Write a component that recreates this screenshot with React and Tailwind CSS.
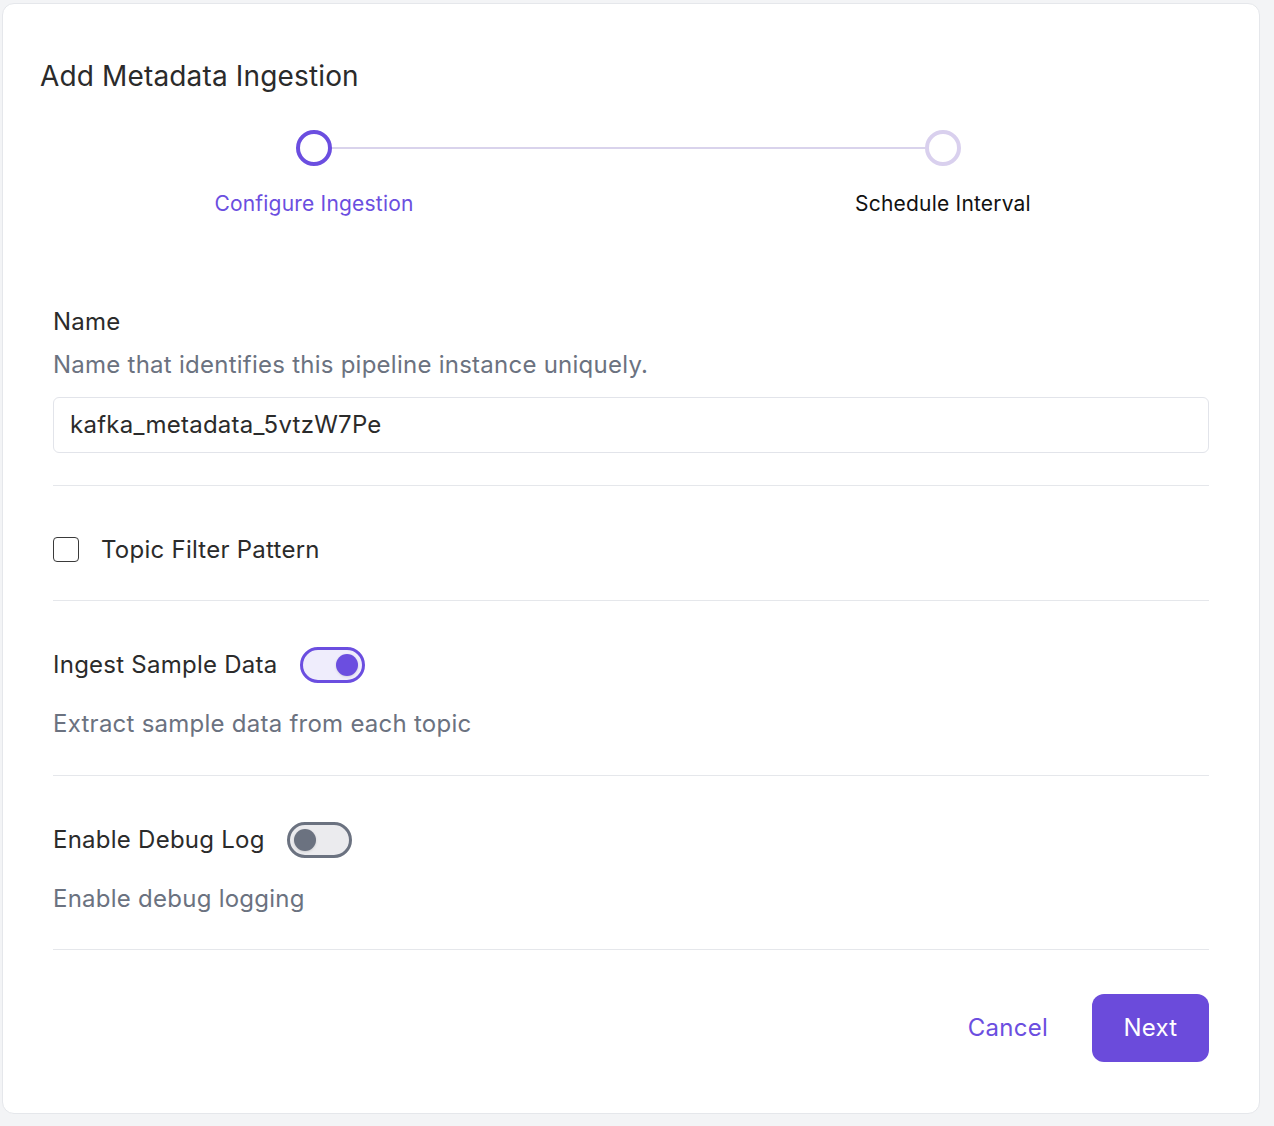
import React from 'react';

const font = { fontFamily: 'Inter, "Noto Sans", sans-serif' };

const Toggle = ({ on }) => (
  <div
    className={
      on
        ? 'w-[65px] h-[36px] rounded-full border-[3px] border-[#6b4ee0] bg-[#efedfc] flex items-center justify-end px-[4px]'
        : 'w-[65px] h-[36px] rounded-full border-[3px] border-[#6b7280] bg-[#ebebee] flex items-center justify-start px-[4px]'
    }
  >
    <div
      className={
        on
          ? 'w-[22px] h-[22px] rounded-full bg-[#6b4ee0] shadow'
          : 'w-[22px] h-[22px] rounded-full bg-[#6b7280] shadow'
      }
    />
  </div>
);

export default function App() {
  return (
    <div className="min-h-[1126px] bg-[#f3f4f6] pt-[3px] pl-[2px] pr-[14px] pb-[12px]" style={font}>
      <div className="bg-white rounded-[12px] border border-[#e5e7eb] h-[1111px] flex flex-col">
        {/* Title */}
        <h1 className="pl-[37px] pt-[54px] text-[28px] leading-[36px] tracking-[0.15px] text-[#2b2b2b]">
          Add Metadata Ingestion
        </h1>

        {/* Stepper */}
        <div className="mt-[36px] grid grid-cols-2">
          <div className="flex flex-col items-center -ml-[6px]">
            <div className="relative w-full h-[36px] flex justify-center">
              <div className="absolute left-1/2 right-0 top-[17px] h-[2px] bg-[#d9d3ec]" />
              <div className="relative w-[36px] h-[36px] rounded-full border-[4px] border-[#6b4ee0] bg-white" />
            </div>
            <span className="mt-[25px] text-[21px] leading-[26px] text-[#6b4ee0] tracking-[0.2px]">
              Configure Ingestion
            </span>
          </div>
          <div className="flex flex-col items-center mr-[4px]">
            <div className="relative w-full h-[36px] flex justify-center">
              <div className="absolute left-0 right-1/2 top-[17px] h-[2px] bg-[#d9d3ec]" />
              <div className="relative w-[36px] h-[36px] rounded-full border-[4px] border-[#d9d0ee] bg-white" />
            </div>
            <span className="mt-[25px] text-[21px] leading-[26px] text-[#111111] tracking-[0.2px]">
              Schedule Interval
            </span>
          </div>
        </div>

        {/* Form */}
        <div className="px-[50px] mt-[90px] text-[24px] tracking-[0.25px]">
          <div className="pb-[32px]">
            <div className="leading-[30px] text-[#2b2b2b]">Name</div>
            <div className="mt-[13px] leading-[30px] text-[#6b7280]">
              Name that identifies this pipeline instance uniquely.
            </div>
            <div className="mt-[17px] h-[56px] rounded-[6px] border border-[#e2e4ea] flex items-center px-[16px] text-[#2b2b2b]">
              kafka_metadata_5vtzW7Pe
            </div>
          </div>

          <div className="border-t border-[#e5e7eb] h-[115px] pt-[13px] flex items-center gap-[22px]">
            <div className="w-[26px] h-[25px] rounded-[4px] border-[1.5px] border-[#3a3a3a]" />
            <span className="leading-[30px] text-[#2b2b2b]">Topic Filter Pattern</span>
          </div>

          <div className="border-t border-[#e5e7eb] pt-[46px] pb-[36px]">
            <div className="flex items-center gap-[22px]">
              <span className="leading-[30px] text-[#2b2b2b]">Ingest Sample Data</span>
              <Toggle on />
            </div>
            <div className="mt-[26px] leading-[30px] text-[#6b7280]">Extract sample data from each topic</div>
          </div>

          <div className="border-t border-[#e5e7eb] pt-[46px] pb-[35px]">
            <div className="flex items-center gap-[22px]">
              <span className="leading-[30px] text-[#2b2b2b]">Enable Debug Log</span>
              <Toggle />
            </div>
            <div className="mt-[26px] leading-[30px] text-[#6b7280]">Enable debug logging</div>
          </div>

          <div className="border-t border-[#e5e7eb] pt-[44px] flex justify-end items-center gap-[44px]">
            <button className="text-[#6b4ee0] leading-[30px]">Cancel</button>
            <button className="w-[117px] h-[68px] rounded-[12px] bg-[#6b4bdb] text-white">Next</button>
          </div>
        </div>
      </div>
    </div>
  );
}
